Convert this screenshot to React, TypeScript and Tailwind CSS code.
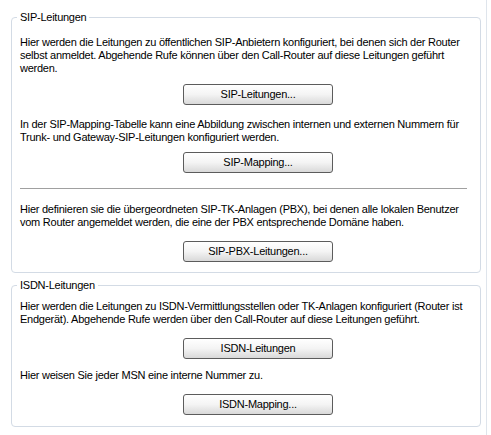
import React from 'react';

const font = { fontFamily: 'Tahoma, "Liberation Sans", Arial, sans-serif' };

const XpButton = ({ label, className }: { label: string; className?: string }) => (
    <div className={`flex pl-[163px] ${className ?? ''}`}>
        <button className="w-[150px] h-[21px] rounded-[3px] border border-[#5c5c5c] bg-gradient-to-b from-white via-[#f4f4f4] to-[#d9d9d9] text-[11px] leading-[13px] tracking-[-0.25px] text-black">
            {label}
        </button>
    </div>
);

const Group = ({ title, className, children }: { title: string; className?: string; children: React.ReactNode }) => (
    <fieldset className={`mx-[11px] w-[470px] rounded-[4px] border border-[#d3dbe5] px-[8px] ${className ?? ''}`}>
        <legend className="ml-[-3px] px-[3px] text-[11px] leading-[13px] tracking-[-0.25px] text-black">{title}</legend>
        {children}
    </fieldset>
);

const Text = ({ className, children }: { className?: string; children: React.ReactNode }) => (
    <p className={`text-[11px] leading-[13px] tracking-[-0.25px] ${className ?? ''}`}>{children}</p>
);

const App = () => {
    return (
        <div className="flex w-[491px] h-[435px] bg-white text-black" style={font}>
            <div className="w-[486px] pt-[11px]">
                <Group title="SIP-Leitungen" className="h-[262px] pt-[12px]">
                    <Text>
                        Hier werden die Leitungen zu öffentlichen SIP-Anbietern konfiguriert, bei denen sich der Router
                        selbst anmeldet. Abgehende Rufe können über den Call-Router auf diese Leitungen geführt
                        werden.
                    </Text>
                    <XpButton label="SIP-Leitungen..." className="mt-[9px]" />
                    <Text className="mt-[13px]">
                        In der SIP-Mapping-Tabelle kann eine Abbildung zwischen internen und externen Nummern für
                        Trunk- und Gateway-SIP-Leitungen konfiguriert werden.
                    </Text>
                    <XpButton label="SIP-Mapping..." className="mt-[8px]" />
                    <div className="mt-[15px] mr-[5px] h-px bg-[#a0a0a0]" />
                    <Text className="mt-[14px]">
                        Hier definieren sie die übergeordneten SIP-TK-Anlagen (PBX), bei denen alle lokalen Benutzer
                        vom Router angemeldet werden, die eine der PBX entsprechende Domäne haben.
                    </Text>
                    <XpButton label="SIP-PBX-Leitungen..." className="mt-[12px]" />
                </Group>
                <Group title="ISDN-Leitungen" className="mt-[6px] h-[148px] pt-[8px]">
                    <Text>
                        Hier werden die Leitungen zu ISDN-Vermittlungsstellen oder TK-Anlagen konfiguriert (Router ist
                        Endgerät). Abgehende Rufe werden über den Call-Router auf diese Leitungen geführt.
                    </Text>
                    <XpButton label="ISDN-Leitungen" className="mt-[12px]" />
                    <Text className="mt-[10px]">Hier weisen Sie jeder MSN eine interne Nummer zu.</Text>
                    <XpButton label="ISDN-Mapping..." className="mt-[12px]" />
                </Group>
            </div>
            <div className="w-px h-full bg-[#dfe5ec]" />
        </div>
    );
};

export default App;
